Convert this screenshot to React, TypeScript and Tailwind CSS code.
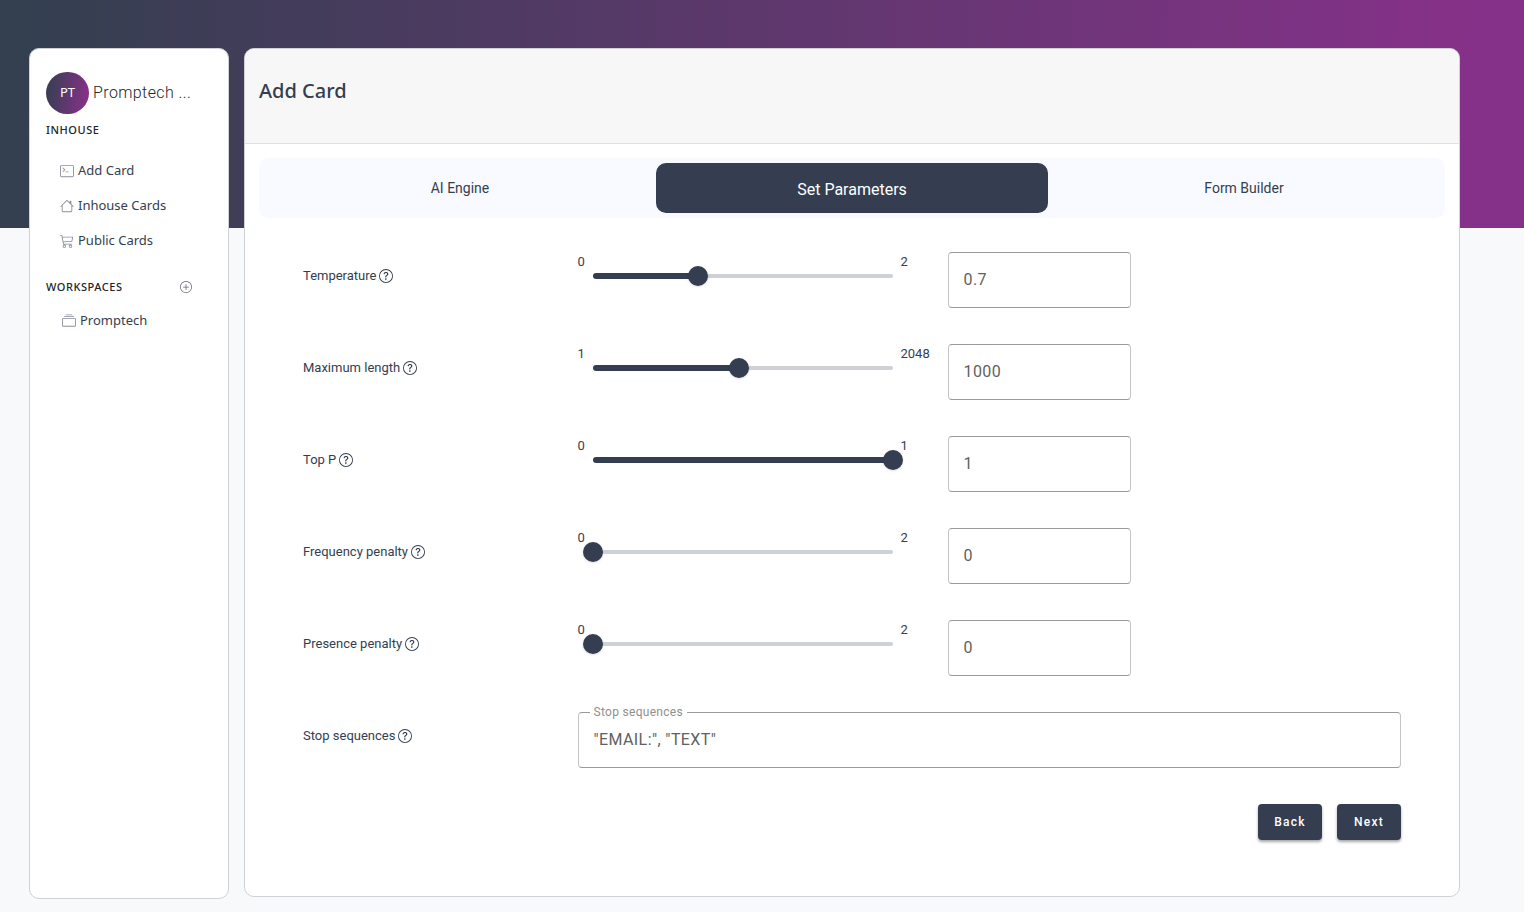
import { useState } from 'react';
import type { ReactNode } from 'react';
import { BsCart3, BsCollection, BsHouse, BsPlusCircle, BsQuestionCircle, BsTerminal } from 'react-icons/bs';

type Param = { id: string; label: string; min: number; max: number; step: number; initial: number };

const params: Param[] = [
  { id: 'temperature', label: 'Temperature', min: 0, max: 2, step: 0.01, initial: 0.7 },
  { id: 'max-length', label: 'Maximum length', min: 1, max: 2048, step: 1, initial: 1000 },
  { id: 'top-p', label: 'Top P', min: 0, max: 1, step: 0.01, initial: 1 },
  { id: 'frequency', label: 'Frequency penalty', min: 0, max: 2, step: 0.01, initial: 0 },
  { id: 'presence', label: 'Presence penalty', min: 0, max: 2, step: 0.01, initial: 0 },
];

function NavLink({ icon, children }: { icon: ReactNode; children: ReactNode }) {
  return (
    <a href="#" className="flex h-[35px] items-center gap-1 text-[13px] text-[#343e50]">
      <span className="text-[#8a8f99]">{icon}</span>
      {children}
    </a>
  );
}

function SectionTitle({ children }: { children: ReactNode }) {
  return <h2 className="text-[11px] leading-4 font-medium tracking-wider text-[#212529] uppercase">{children}</h2>;
}

function FieldLabel({ htmlFor, children }: { htmlFor: string; children: ReactNode }) {
  return (
    <label htmlFor={htmlFor} className="flex h-[47px] w-1/4 items-center gap-[3px] text-[13px] text-[#343e50]">
      {children}
      <BsQuestionCircle size={14} />
    </label>
  );
}

const fieldClass =
  'h-14 w-full rounded-[4px] border border-x-[#c4c4c4] border-y-[#9a9a9a] bg-white px-[15px] pb-[2px] text-base tracking-wide text-[#616161] outline-none';

function ParamRow({ param }: { param: Param }) {
  const [value, setValue] = useState(param.initial);
  const percent = ((value - param.min) / (param.max - param.min)) * 100;
  return (
    <div className="flex">
      <FieldLabel htmlFor={param.id}>{param.label}</FieldLabel>
      <div className="flex w-[370px] shrink-0 text-[13px] leading-5 text-[#343e50]">
        <span className="w-[5px]">{param.min}</span>
        <div className="grid h-12 w-80 items-center">
          <div className="mx-2.5 h-1 rounded-full bg-[#cdd0d4] [grid-area:1/1]" />
          <div className="mx-2.5 [grid-area:1/1]">
            <div className="h-1.5 rounded-full bg-[#343e50]" style={{ width: `${percent}%` }} />
          </div>
          <input
            id={param.id}
            type="range"
            min={param.min}
            max={param.max}
            step={param.step}
            value={value}
            onChange={(e) => setValue(Number(e.target.value))}
            className="h-5 w-full cursor-pointer appearance-none bg-transparent [grid-area:1/1] [&::-webkit-slider-thumb]:size-5 [&::-webkit-slider-thumb]:appearance-none [&::-webkit-slider-thumb]:rounded-full [&::-webkit-slider-thumb]:bg-[#343e50] [&::-webkit-slider-thumb]:shadow"
          />
        </div>
        <span className="-ml-0.5">{param.max}</span>
      </div>
      <div className="w-1/6">
        <input
          aria-label={`${param.label} value`}
          type="text"
          inputMode="decimal"
          value={value}
          onChange={(e) => setValue(Number(e.target.value) || 0)}
          className={fieldClass}
        />
      </div>
    </div>
  );
}

function ActionButton({ children }: { children: ReactNode }) {
  return (
    <button type="button" className="h-9 w-16 rounded-[4px] bg-[#343e50] text-xs font-medium tracking-widest text-white shadow-[0_2px_3px_rgba(0,0,0,0.35)]">
      {children}
    </button>
  );
}

export default function App() {
  const [stops, setStops] = useState('"EMAIL:", "TEXT"');
  return (
    <div className="min-h-screen bg-[#f8f9fb] bg-[linear-gradient(92deg,#343f50_2%,#863189_96%)] bg-[length:100%_228px] bg-no-repeat pt-12 pr-16 pb-3 pl-[29px] font-['Roboto',sans-serif]">
      <div className="flex gap-[15px]">
        <aside className="w-[200px] shrink-0 rounded-[10px] border border-[#cfd1d4] bg-white px-4 pt-[23px] font-['Noto_Sans',sans-serif]">
          <div className="flex items-center gap-1 font-['Roboto',sans-serif]">
            <span className="flex h-[42px] w-[43px] shrink-0 items-center justify-center rounded-full bg-[linear-gradient(98deg,#343f50_2%,#863189_93%)] font-['Noto_Sans',sans-serif] text-[13px] text-white">
              PT
            </span>
            <span className="text-base font-light tracking-wide text-[#212529]">Promptech ...</span>
          </div>
          <div className="mt-2">
            <SectionTitle>Inhouse</SectionTitle>
          </div>
          <nav className="mt-[15px] pl-3.5">
            <NavLink icon={<BsTerminal size={14} />}>Add Card</NavLink>
            <NavLink icon={<BsHouse size={14} />}>Inhouse Cards</NavLink>
            <NavLink icon={<BsCart3 size={14} />}>Public Cards</NavLink>
          </nav>
          <div className="mt-[21px] flex items-center justify-between pr-5">
            <SectionTitle>Workspaces</SectionTitle>
            <button type="button" aria-label="Add workspace" className="text-[#5f6672]">
              <BsPlusCircle size={12} />
            </button>
          </div>
          <nav className="mt-2 pl-4">
            <NavLink icon={<BsCollection size={14} />}>Promptech</NavLink>
          </nav>
        </aside>

        <main className="mb-0.5 min-w-0 flex-1 overflow-hidden rounded-[10px] border border-[#cfd1d4] bg-white">
          <header className="h-[95px] border-b border-[#dedfe1] bg-[#f7f7f7] px-3.5 pt-7">
            <h1 className="font-['Noto_Sans',sans-serif] text-xl leading-7 font-medium text-[#343e50]">Add Card</h1>
          </header>
          <div className="px-3.5 pt-3.5 pb-14">
            <div role="tablist" className="grid h-[60px] grid-cols-3 rounded-[10px] bg-[#f8faff] p-[5px] text-sm text-[#343e50]">
              <button type="button" role="tab" aria-selected={false}>
                AI Engine
              </button>
              <button type="button" role="tab" aria-selected={true} className="rounded-[10px] bg-[#343e50] pt-[3px] text-base text-white">
                Set Parameters
              </button>
              <button type="button" role="tab" aria-selected={false}>
                Form Builder
              </button>
            </div>

            <form className="mt-[34px] flex flex-col gap-9 px-11">
              {params.map((p) => (
                <ParamRow key={p.id} param={p} />
              ))}
              <div className="flex">
                <FieldLabel htmlFor="stops">Stop sequences</FieldLabel>
                <div className="relative flex-1">
                  <label htmlFor="stops" className="absolute -top-2 left-3 bg-white px-1 text-xs leading-4 tracking-wide text-[#8f8f8f]">
                    Stop sequences
                  </label>
                  <input id="stops" type="text" value={stops} onChange={(e) => setStops(e.target.value)} className={fieldClass} />
                </div>
              </div>
              <div className="flex justify-end gap-[15px]">
                <ActionButton>Back</ActionButton>
                <ActionButton>Next</ActionButton>
              </div>
            </form>
          </div>
        </main>
      </div>
    </div>
  );
}
